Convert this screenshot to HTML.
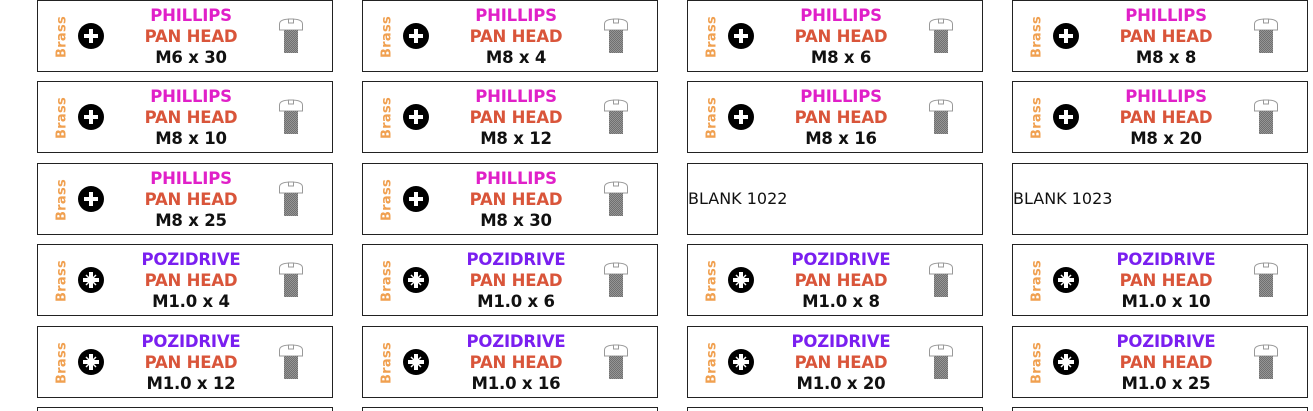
<!DOCTYPE html>
<html style="margin:0;width:1313px;height:411px;overflow:hidden"><head><meta charset="utf-8"><style>
html,body{margin:0;width:1313px;height:411px;overflow:hidden}
body{background:#fff;position:relative;font-family:"DejaVu Sans","Liberation Sans",sans-serif}
.c{position:absolute;width:294px;height:70px;border:1px solid #222;background:#fff}
.e{position:absolute;width:294px;height:3px;border:1px solid #222;border-bottom:0;background:#fff}
.b{position:absolute;left:24px;top:36px;transform:translate(-50%,-50%) rotate(-90deg);color:#f0a050;font-weight:bold;font-size:13px;letter-spacing:0.3px}
.i{position:absolute;left:40px;top:22px;width:26px;height:26px}
.t{position:absolute;left:83px;width:140px;top:4px;text-align:center;font-weight:bold;font-size:16.5px;line-height:21px;letter-spacing:-0.2px}
.p{color:#e020c8}.z{color:#7a1ff0}.h{color:#d9553a}.m{color:#111}
.s{position:absolute;left:240px;top:17px}
.bl{position:absolute;left:0;top:25px;font-size:16px;color:#111}
</style></head><body>
<svg width="0" height="0" style="position:absolute"><defs>
<pattern id="hp" width="2" height="2" patternUnits="userSpaceOnUse"><rect width="2" height="2" fill="#a0a0a0"/><path d="M0 2L2 0" stroke="#666" stroke-width="0.8"/></pattern>
<g id="sc"><path d="M1.5 12 V6 Q1.5 1 13 1 Q24.5 1 24.5 6 V12 Z" fill="#fff" stroke="#999" stroke-width="1"/><rect x="10.5" y="1" width="5" height="4" fill="#fff" stroke="#999" stroke-width="1"/><rect x="6" y="12" width="14" height="23" fill="url(#hp)"/></g>
<g id="ph"><circle cx="13" cy="13" r="13" fill="#000"/><path d="M13 6V20M6 13H20" stroke="#fff" stroke-width="4"/></g>
<g id="pz"><circle cx="13" cy="13" r="13" fill="#000"/><path d="M13 5V21M5 13H21" stroke="#fff" stroke-width="4"/><path d="M8 8L18 18M18 8L8 18" stroke="#fff" stroke-width="1.5"/></g>
</defs></svg>
<div id="root"></div>
<script>
var rows=[
[["p","M6 x 30"],["p","M8 x 4"],["p","M8 x 6"],["p","M8 x 8"]],
[["p","M8 x 10"],["p","M8 x 12"],["p","M8 x 16"],["p","M8 x 20"]],
[["p","M8 x 25"],["p","M8 x 30"],["b","BLANK 1022"],["b","BLANK 1023"]],
[["z","M1.0 x 4"],["z","M1.0 x 6"],["z","M1.0 x 8"],["z","M1.0 x 10"]],
[["z","M1.0 x 12"],["z","M1.0 x 16"],["z","M1.0 x 20"],["z","M1.0 x 25"]]];
var tops=[0,81,163,244,326],h="";
rows.forEach(function(r,ri){r.forEach(function(c,ci){
var x=37+ci*325,y=tops[ri];
h+='<div class="c" style="left:'+x+'px;top:'+y+'px">';
if(c[0]=="b"){h+='<div class="bl">'+c[1]+'</div>';}
else{h+='<div class="b">Brass</div><svg class="i" viewBox="0 0 26 26"><use href="#'+(c[0]=="p"?"ph":"pz")+'"/></svg>'+
'<div class="t"><div class="'+c[0]+'">'+(c[0]=="p"?"PHILLIPS":"POZIDRIVE")+'</div><div class="h">PAN HEAD</div><div class="m">'+c[1]+'</div></div>'+
'<svg class="s" width="27" height="36" viewBox="0 0 27 36"><use href="#sc"/></svg>';}
h+='</div>';});});
for(var k=0;k<4;k++){h+='<div class="e" style="left:'+(37+k*325)+'px;top:407px"></div>';}
document.getElementById("root").innerHTML=h;
</script>
</body></html>
